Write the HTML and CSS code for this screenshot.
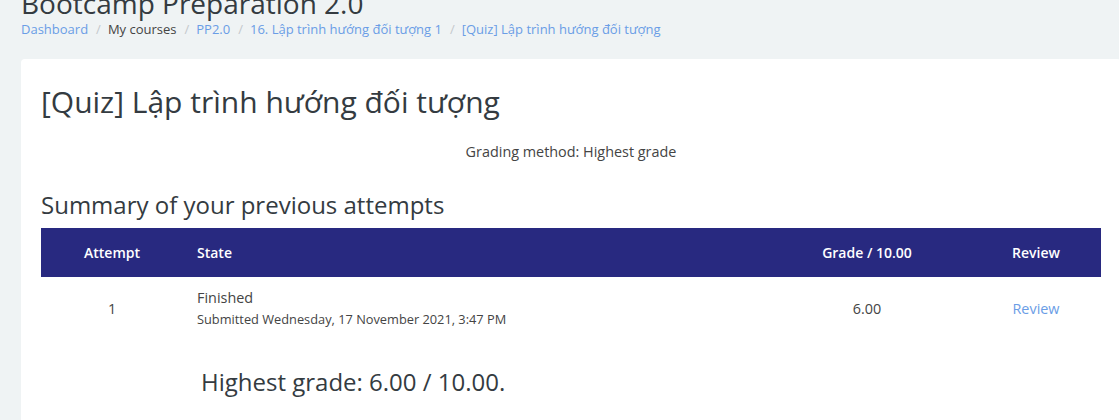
FILE: index.html
```html
<!DOCTYPE html>
<html lang="vi">
<head>
<meta charset="utf-8">
<title>[Quiz] Lập trình hướng đối tượng</title>
<link rel="stylesheet" href="styles.css">
</head>
<body>
<div class="page">
  <header class="page-header">
    <h1 class="course-title">Bootcamp Preparation 2.0</h1>
    <nav class="breadcrumb">
      <a href="#">Dashboard</a><span class="sep">/</span>
      <span class="crumb-text">My courses</span><span class="sep">/</span>
      <a href="#">PP2.0</a><span class="sep">/</span>
      <a href="#">16. Lập trình hướng đối tượng 1</a><span class="sep">/</span>
      <a href="#">[Quiz] Lập trình hướng đối tượng</a>
    </nav>
  </header>
  <main class="card">
    <h2 class="quiz-title">[Quiz] Lập trình hướng đối tượng</h2>
    <p class="grading">Grading method: Highest grade</p>
    <h3 class="summary-title">Summary of your previous attempts</h3>
    <table class="attempts">
      <thead>
        <tr>
          <th class="c-attempt">Attempt</th>
          <th class="c-state">State</th>
          <th class="c-grade">Grade / 10.00</th>
          <th class="c-review">Review</th>
        </tr>
      </thead>
      <tbody>
        <tr>
          <td class="c-attempt num">1</td>
          <td class="c-state">Finished<span class="submitted">Submitted Wednesday, 17 November 2021, 3:47 PM</span></td>
          <td class="c-grade">6.00</td>
          <td class="c-review"><a href="#">Review</a></td>
        </tr>
      </tbody>
    </table>
    <p class="highest">Highest grade: 6.00 / 10.00.</p>
  </main>
</div>
</body>
</html>
```
FILE: styles.css
```css
html, body {
  margin: 0;
  padding: 0;
}
body {
  background: #eff3f4;
  font-family: "Open Sans", "Noto Sans", sans-serif;
  color: #373a3c;
  overflow: hidden;
}
.page {
  width: 1100px;
  padding-left: 21px;
}
.page-header {
  margin-top: -14px;
}
.course-title {
  margin: 0;
  font-size: 28px;
  font-weight: 400;
  line-height: 34px;
  color: #343b41;
}
.breadcrumb {
  display: flex;
  align-items: center;
  font-size: 13px;
  line-height: 18px;
  margin-top: -2px;
  height: 22px;
}
.breadcrumb a {
  color: #6a9de6;
  text-decoration: none;
}
.crumb-text {
  color: #444;
}
.sep {
  color: #c4c8cc;
  padding: 0 7px 0 8px;
}
.card {
  margin-top: 19px;
  background: #fff;
  border-radius: 4px;
  padding: 23px 20px 20px 20px;
  min-height: 330px;
}
.quiz-title {
  margin: 0;
  font-size: 30px;
  font-weight: 400;
  line-height: 40px;
  color: #343b41;
}
.grading {
  margin: 19px 0 0 0;
  text-align: center;
  font-size: 14.4px;
  line-height: 22px;
  color: #444;
}
.summary-title {
  margin: 26px 0 0 0;
  font-size: 24px;
  font-weight: 400;
  line-height: 32px;
  color: #343b41;
}
.attempts {
  width: 100%;
  border-collapse: collapse;
  margin-top: 7px;
  font-size: 14.4px;
}
.attempts thead th {
  background: #282980;
  color: #fff;
  font-weight: 600;
  font-size: 14px;
  height: 49px;
  padding: 0 14px;
}
.attempts td {
  padding: 11px 14px 10px 14px;
  color: #444;
  vertical-align: middle;
  line-height: 20px;
}
.c-attempt {
  width: 114px;
  text-align: center;
}
.c-state {
  text-align: left;
}
.c-grade {
  width: 180px;
  text-align: center;
}
.c-review {
  width: 102px;
  text-align: center;
}
.num {
  color: #3a4a8a;
}
.submitted {
  display: block;
  font-size: 12.8px;
  line-height: 22px;
}
.attempts a {
  color: #6a9de6;
  text-decoration: none;
}
.highest {
  margin: 26px 0 0 160px;
  font-size: 24px;
  line-height: 32px;
  color: #343b41;
}
```
